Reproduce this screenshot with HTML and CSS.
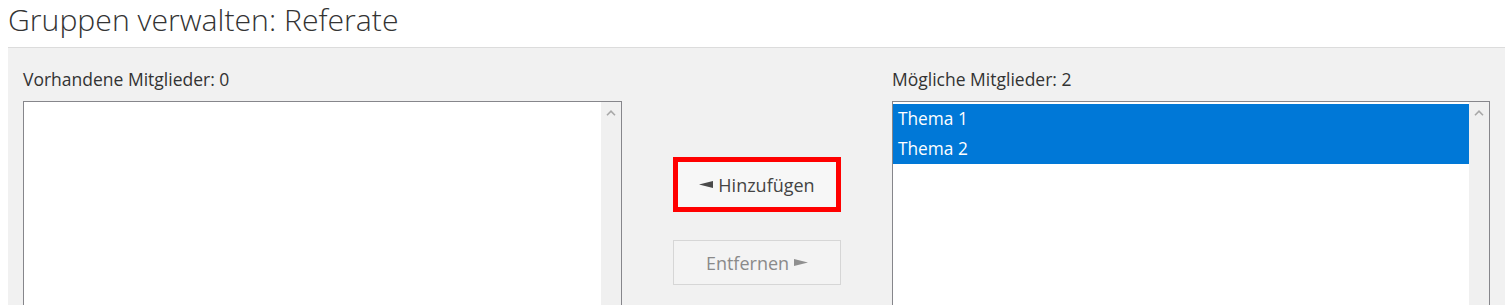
FILE: index.html
```html
<!DOCTYPE html>
<html lang="de">
<head>
<meta charset="utf-8">
<title>Gruppen verwalten: Referate</title>
<link rel="stylesheet" href="styles.css">
</head>
<body>
<h1 class="title">Gruppen verwalten: Referate</h1>
<div class="panel">
  <div class="col">
    <div class="label">Vorhandene Mitglieder: 0</div>
    <div class="listbox">
      <div class="items"></div>
      <div class="scrollbar">
        <svg class="chev" width="10" height="6" viewBox="0 0 10 6"><polyline points="1,5.2 5,1.2 9,5.2" fill="none" stroke="#a8a8a8" stroke-width="1.6"/></svg>
      </div>
    </div>
  </div>
  <div class="mid">
    <button class="btn btn-add"><svg class="arrow" width="14" height="7" viewBox="0 0 14 7"><polygon points="0,3.5 14,0 14,7" fill="#4a4a4a"/></svg>Hinzufügen</button>
    <button class="btn btn-remove" disabled>Entfernen<svg class="arrow" width="14" height="7" viewBox="0 0 14 7"><polygon points="14,3.5 0,0 0,7" fill="#8f8f8f"/></svg></button>
  </div>
  <div class="col">
    <div class="label">Mögliche Mitglieder: 2</div>
    <div class="listbox">
      <div class="items">
        <div class="item selected">Thema 1</div>
        <div class="item selected">Thema 2</div>
      </div>
      <div class="scrollbar">
        <svg class="chev" width="10" height="6" viewBox="0 0 10 6"><polyline points="1,5.2 5,1.2 9,5.2" fill="none" stroke="#a8a8a8" stroke-width="1.6"/></svg>
      </div>
    </div>
  </div>
</div>
</body>
</html>
```

FILE: styles.css
```css
html, body {
  margin: 0;
  padding: 0;
  background: #ffffff;
}
body {
  padding: 0 4px 0 8px;
  font-family: "Open Sans", "Noto Sans", sans-serif;
  color: #333333;
  overflow: hidden;
}
.title {
  margin: 0;
  height: 47px;
  font-weight: 300;
  font-size: 30.2px;
  line-height: 40px;
  color: #333333;
  letter-spacing: 0;
}
.panel {
  background: #f1f1f1;
  border-top: 1px solid #dcdcdc;
  padding: 17px 15px 0 15px;
  display: grid;
  grid-template-columns: 599px 270px 598px;
  height: 400px;
  box-sizing: border-box;
}
.label {
  font-size: 17.5px;
  line-height: 28px;
  height: 36px;
  color: #333333;
}
.listbox {
  border: 1px solid #86868b;
  background: #ffffff;
  height: 300px;
  display: flex;
  box-sizing: border-box;
}
.items {
  flex: 1;
  padding-top: 2px;
}
.item {
  height: 30px;
  line-height: 30px;
  padding-left: 5px;
  font-size: 17.3px;
}
.item.selected {
  background: #0078d7;
  color: #ffffff;
}
.scrollbar {
  width: 20px;
  background: #f0f0f0;
  display: flex;
  justify-content: center;
  align-items: flex-start;
}
.chev {
  margin-top: 8px;
}
.mid {
  display: flex;
  flex-direction: column;
  align-items: center;
  padding-top: 92px;
  gap: 28px;
}
.btn {
  width: 168px;
  box-sizing: border-box;
  font-family: "Open Sans", "Noto Sans", sans-serif;
  font-size: 18px;
  display: flex;
  align-items: center;
  justify-content: center;
  gap: 5px;
  padding: 0;
  cursor: default;
}
.btn-add {
  height: 55px;
  border: 5px solid #ff0000;
  background: #f7f7f7;
  color: #444444;
}
.btn-remove {
  height: 45px;
  border: 1px solid #d6d6d6;
  background: #f3f3f3;
  color: #8a8a8a;
}
.arrow {
  display: block;
}
```
